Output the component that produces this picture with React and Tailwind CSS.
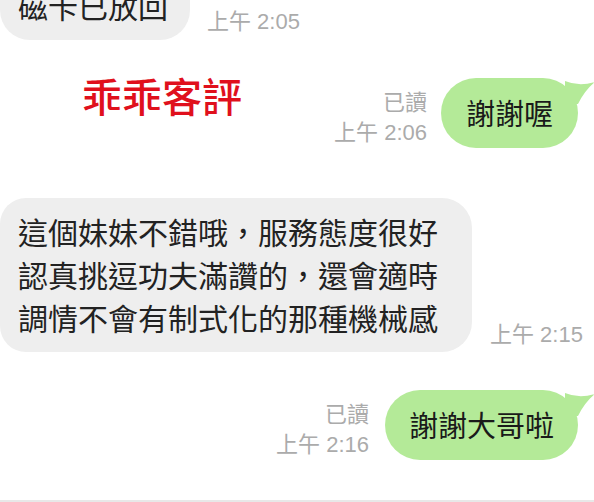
const font = { fontFamily: '"Noto Sans CJK TC", "Noto Sans", sans-serif' };
const metaFont = { fontFamily: '"Liberation Sans", "Noto Sans CJK TC", sans-serif' };

function Tail() {
  return (
    <svg className="absolute right-[-17px] top-0" width="30" height="30" viewBox="0 0 30 30">
      <path d="M0 3 Q14 9 30 4 Q20 12 13 26 L0 26 Z" fill="#b4ea98" />
    </svg>
  );
}

function Meta({ read, time }) {
  return (
    <div className="flex flex-col items-end text-[22px] leading-[30px] text-[#ababab]" style={metaFont}>
      {read && <span>已讀</span>}
      <span>{time}</span>
    </div>
  );
}

export default function App() {
  return (
    <div className="w-[594px] h-[502px] overflow-hidden bg-white flex flex-col" style={font}>
      {/* row 1 */}
      <div className="flex items-end gap-[17px] mt-[-30px]">
        <div className="h-[70px] w-[190px] rounded-[30px] bg-[#eeeeee] pl-[18px] flex items-center text-[30px] text-[#222] whitespace-nowrap">
          磁卡已放回
        </div>
        <div className="text-[22px] leading-[30px] text-[#ababab] mb-[3px] whitespace-nowrap" style={metaFont}>上午 2:05</div>
      </div>

      {/* row 2 */}
      <div className="flex justify-between mt-[38px]">
        <div className="ml-[82px] mt-[-4px] text-[40px] leading-[42px] font-medium text-[#e0101c]">乖乖客評</div>
        <div className="flex items-end gap-[14px] mr-[16px]">
          <Meta read time="上午 2:06" />
          <div className="relative h-[70px] px-[25px] rounded-[35px] bg-[#b4ea98] flex items-center text-[29px] text-[#1a1a1a] whitespace-nowrap">
            謝謝喔
            <Tail />
          </div>
        </div>
      </div>

      {/* row 3 */}
      <div className="flex items-end gap-[18px] mt-[50px]">
        <div className="w-[472px] h-[154px] rounded-r-[30px] rounded-l-[26px] bg-[#eeeeee] pl-[18px] pt-[12px] text-[30px] leading-[43px] text-[#222] whitespace-nowrap">
          <div>這個妹妹不錯哦，服務態度很好</div>
          <div>認真挑逗功夫滿讚的，還會適時</div>
          <div>調情不會有制式化的那種機械感</div>
        </div>
        <div className="text-[22px] leading-[30px] text-[#ababab] mb-[2px] whitespace-nowrap" style={metaFont}>上午 2:15</div>
      </div>

      {/* row 4 */}
      <div className="flex justify-end mt-[38px]">
        <div className="flex items-end gap-[16px] mr-[16px]">
          <Meta read time="上午 2:16" />
          <div className="relative h-[70px] px-[24px] rounded-[35px] bg-[#b4ea98] flex items-center text-[29px] text-[#1a1a1a] whitespace-nowrap">
            謝謝大哥啦
            <Tail />
          </div>
        </div>
      </div>

      <div className="mt-auto h-[2px] bg-[#e8e8e8]" />
    </div>
  );
}
